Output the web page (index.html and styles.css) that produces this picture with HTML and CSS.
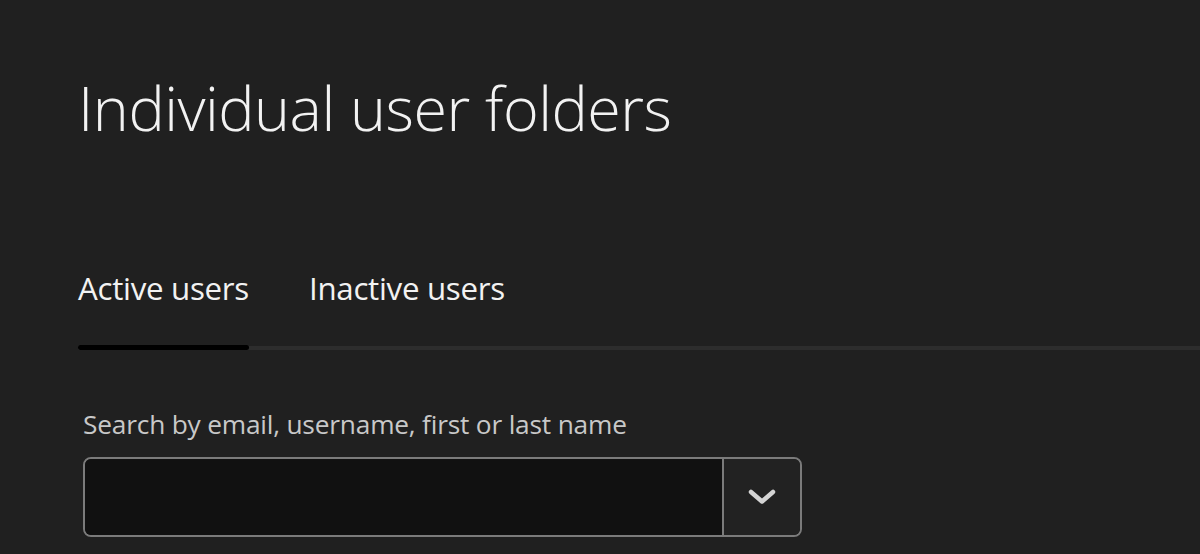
FILE: index.html
```html
<!DOCTYPE html>
<html lang="en">
<head>
    <meta charset="UTF-8">
    <meta name="viewport" content="width=device-width, initial-scale=1.0">
    <link rel="stylesheet" href="styles.css">
    <title>Individual user folders</title>
</head>
<body>
    <div class="page">
        <h1 class="title">Individual user folders</h1>

        <!-- tabs -->
        <div class="tabs">
            <div class="tab active">Active users</div>
            <div class="tab">Inactive users</div>
        </div>

        <!-- search -->
        <div class="search">
            <label class="label" for="userSearch">Search by email, username, first or last name</label>
            <div class="combo">
                <input class="field" id="userSearch" type="text">
                <button class="toggle" type="button">
                    <svg width="30" height="20" viewBox="0 0 30 20">
                        <path d="M4 5 L15 14.5 L26 5" fill="none" stroke="#d4d4d4" stroke-width="4.5" stroke-linecap="round" stroke-linejoin="round"/>
                    </svg>
                </button>
            </div>
        </div>
    </div>
</body>
</html>
```

FILE: styles.css
```css
html, body {
    margin: 0;
    background-color: #202020;
    font-family: "Open Sans", "Liberation Sans", sans-serif;
    color: #f0f0f0;
    overflow: hidden;
}
.page {
    padding: 66px 0 0 78px;
}
.title {
    margin: 0;
    font-size: 61px;
    font-weight: 300;
    line-height: 84px;
    color: #f2f2f2;
    letter-spacing: -0.5px;
}
.tabs {
    display: flex;
    gap: 60px;
    margin-top: 118px;
    border-bottom: 4px solid #2d2d2d;
}
.tab {
    position: relative;
    font-size: 31.3px;
    line-height: 40px;
    padding-bottom: 38px;
    color: #f2f2f2;
    letter-spacing: -0.3px;
}
.tab.active::after {
    content: "";
    position: absolute;
    left: 0;
    right: 0;
    bottom: -4px;
    height: 5px;
    border-radius: 3px;
    background-color: #000;
}
.search {
    padding: 57px 0 0 5px;
}
.label {
    display: block;
    font-size: 26.3px;
    line-height: 34px;
    color: #c8c8c8;
    letter-spacing: -0.2px;
    margin-bottom: 16px;
}
.combo {
    display: flex;
    width: 719px;
    height: 80px;
    box-sizing: border-box;
    border: 2px solid #7b7b7b;
    border-radius: 8px;
    overflow: hidden;
}
.field {
    flex: 1;
    border: none;
    outline: none;
    background-color: #111;
    color: #f0f0f0;
    font-size: 25px;
    padding: 0 16px;
}
.toggle {
    width: 78px;
    border: none;
    border-left: 2px solid #7b7b7b;
    background-color: #222;
    display: flex;
    align-items: center;
    justify-content: center;
    padding: 0;
    cursor: pointer;
}
```
